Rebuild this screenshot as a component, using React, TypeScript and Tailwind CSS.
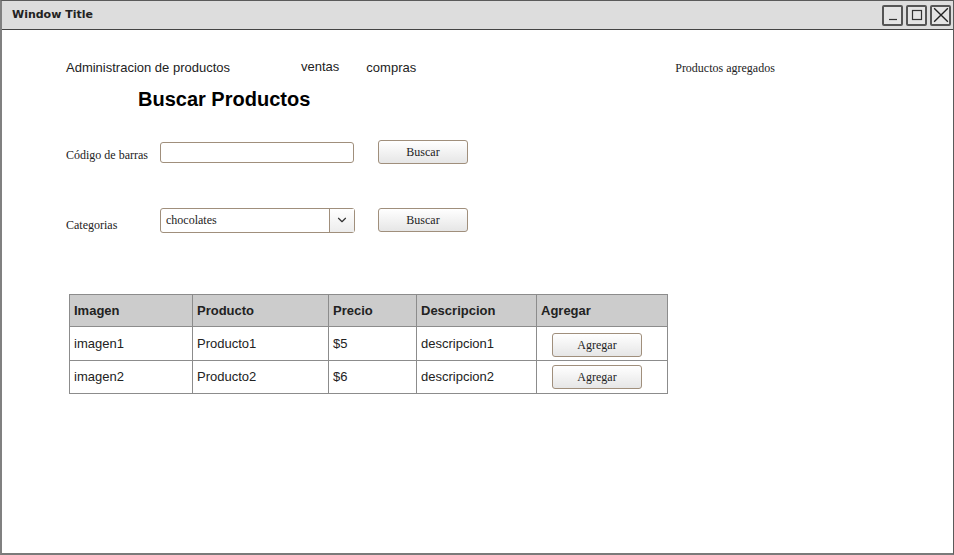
import { ChevronDown } from "lucide-react";

const ROWS = [
  { img: "imagen1", prod: "Producto1", price: "$5", desc: "descripcion1" },
  { img: "imagen2", prod: "Producto2", price: "$6", desc: "descripcion2" },
];

const sans = "font-['Liberation_Sans',Arial,sans-serif]";
const serif = "font-['Liberation_Serif','Times_New_Roman',serif]";

function Btn({ label, className = "" }: { label: string; className?: string }) {
  return (
    <button
      className={`h-[24px] w-[90px] rounded-[3px] border border-[#a08f7c] bg-gradient-to-b from-white to-[#e6e6e6] text-[12px] text-[#222] ${serif} ${className}`}
    >
      {label}
    </button>
  );
}

function WinBox({ children }: { children: React.ReactNode }) {
  return (
    <div className="flex h-[21px] w-[21px] items-center justify-center rounded-[2px] border-2 border-[#555] bg-[#e4e4e4]">
      {children}
    </div>
  );
}

export default function App() {
  return (
    <div className="h-[555px] w-[954px] overflow-hidden bg-white">
      <div className="flex h-[555px] w-[954px] flex-col border border-l-2 border-b-2 border-[#5a5a5a] border-l-[#808080] border-b-[#7a7a7a]">
        {/* title bar */}
        <div className="flex h-[29px] shrink-0 items-center border-b border-[#444] bg-[#dddddd] pl-[10px] pr-[2px]">
          <span className="font-['DejaVu_Sans',sans-serif] text-[11px] font-bold text-[#222]">Window Title</span>
          <div className="ml-auto flex gap-[3px]">
            <WinBox>
              <svg viewBox="0 0 14 14" className="h-[14px] w-[14px]">
                <path d="M3 11.5h8" stroke="#333" strokeWidth="1.2" />
              </svg>
            </WinBox>
            <WinBox>
              <svg viewBox="0 0 14 14" className="h-[14px] w-[14px]">
                <rect x="2.5" y="2.5" width="9" height="9" fill="none" stroke="#333" strokeWidth="1.2" />
              </svg>
            </WinBox>
            <WinBox>
              <svg viewBox="0 0 14 14" className="h-[16px] w-[16px]">
                <path d="M1 1L13 13M13 1L1 13" stroke="#222" strokeWidth="1.2" />
              </svg>
            </WinBox>
          </div>
        </div>

        {/* content */}
        <div className="flex-1 pl-[64px]">
          <nav className={`mt-[30px] flex h-[16px] items-center text-[13px] text-[#222] ${sans}`}>
            <span>Administracion de productos</span>
            <span className="ml-[71px] -mt-[2px]">ventas</span>
            <span className="ml-[27px]">compras</span>
            <span className={`ml-[259px] text-[12px] ${serif}`}>Productos agregados</span>
          </nav>

          <h1 className={`ml-[72px] mt-[11px] text-[20px] font-bold leading-[24px] text-black ${sans}`}>Buscar Productos</h1>

          <div className="mt-[29px] flex items-center">
            <span className={`mt-[6px] w-[94px] text-[12px] text-[#222] ${serif}`}>Código de barras</span>
            <input className="h-[21px] w-[194px] rounded-[3px] border border-[#a08f7c] bg-white outline-none" />
            <Btn label="Buscar" className="ml-[24px]" />
          </div>

          <div className="mt-[42px] flex items-center">
            <span className={`mt-[10px] w-[94px] text-[12px] text-[#222] ${serif}`}>Categorias</span>
            <div className={`flex h-[25px] w-[195px] items-center rounded-[3px] border border-[#a08f7c] bg-white text-[12px] text-[#222] ${serif}`}>
              <span className="flex-1 pl-[5px]">chocolates</span>
              <span className="flex h-full w-[25px] items-center justify-center border-l border-[#a08f7c] bg-gradient-to-b from-white to-[#ececec]">
                <ChevronDown className="h-[14px] w-[14px] text-[#333]" strokeWidth={2} />
              </span>
            </div>
            <Btn label="Buscar" className="ml-[23px]" />
          </div>

          <table className={`ml-[3px] mt-[60px] border-collapse text-[13px] text-[#222] ${sans}`}>
            <thead>
              <tr className="h-[32px] bg-[#cccccc] text-left font-bold">
                <th className="w-[123px] border border-[#8c8c8c] pl-[4px]">Imagen</th>
                <th className="w-[136px] border border-[#8c8c8c] pl-[4px]">Producto</th>
                <th className="w-[88px] border border-[#8c8c8c] pl-[4px]">Precio</th>
                <th className="w-[120px] border border-[#8c8c8c] pl-[4px]">Descripcion</th>
                <th className="w-[131px] border border-[#8c8c8c] pl-[4px]">Agregar</th>
              </tr>
            </thead>
            <tbody>
              {ROWS.map((r, i) => (
                <tr key={r.img} className={i === 0 ? "h-[34px]" : "h-[33px]"}>
                  <td className="border border-[#8c8c8c] pl-[4px]">{r.img}</td>
                  <td className="border border-[#8c8c8c] pl-[4px]">{r.prod}</td>
                  <td className="border border-[#8c8c8c] pl-[4px]">{r.price}</td>
                  <td className="border border-[#8c8c8c] pl-[4px]">{r.desc}</td>
                  <td className="border border-[#8c8c8c] pl-[15px]">
                    <Btn label="Agregar" className={i === 0 ? "mt-[2px] h-[23px]" : "h-[23px]"} />
                  </td>
                </tr>
              ))}
            </tbody>
          </table>
        </div>
      </div>
    </div>
  );
}
